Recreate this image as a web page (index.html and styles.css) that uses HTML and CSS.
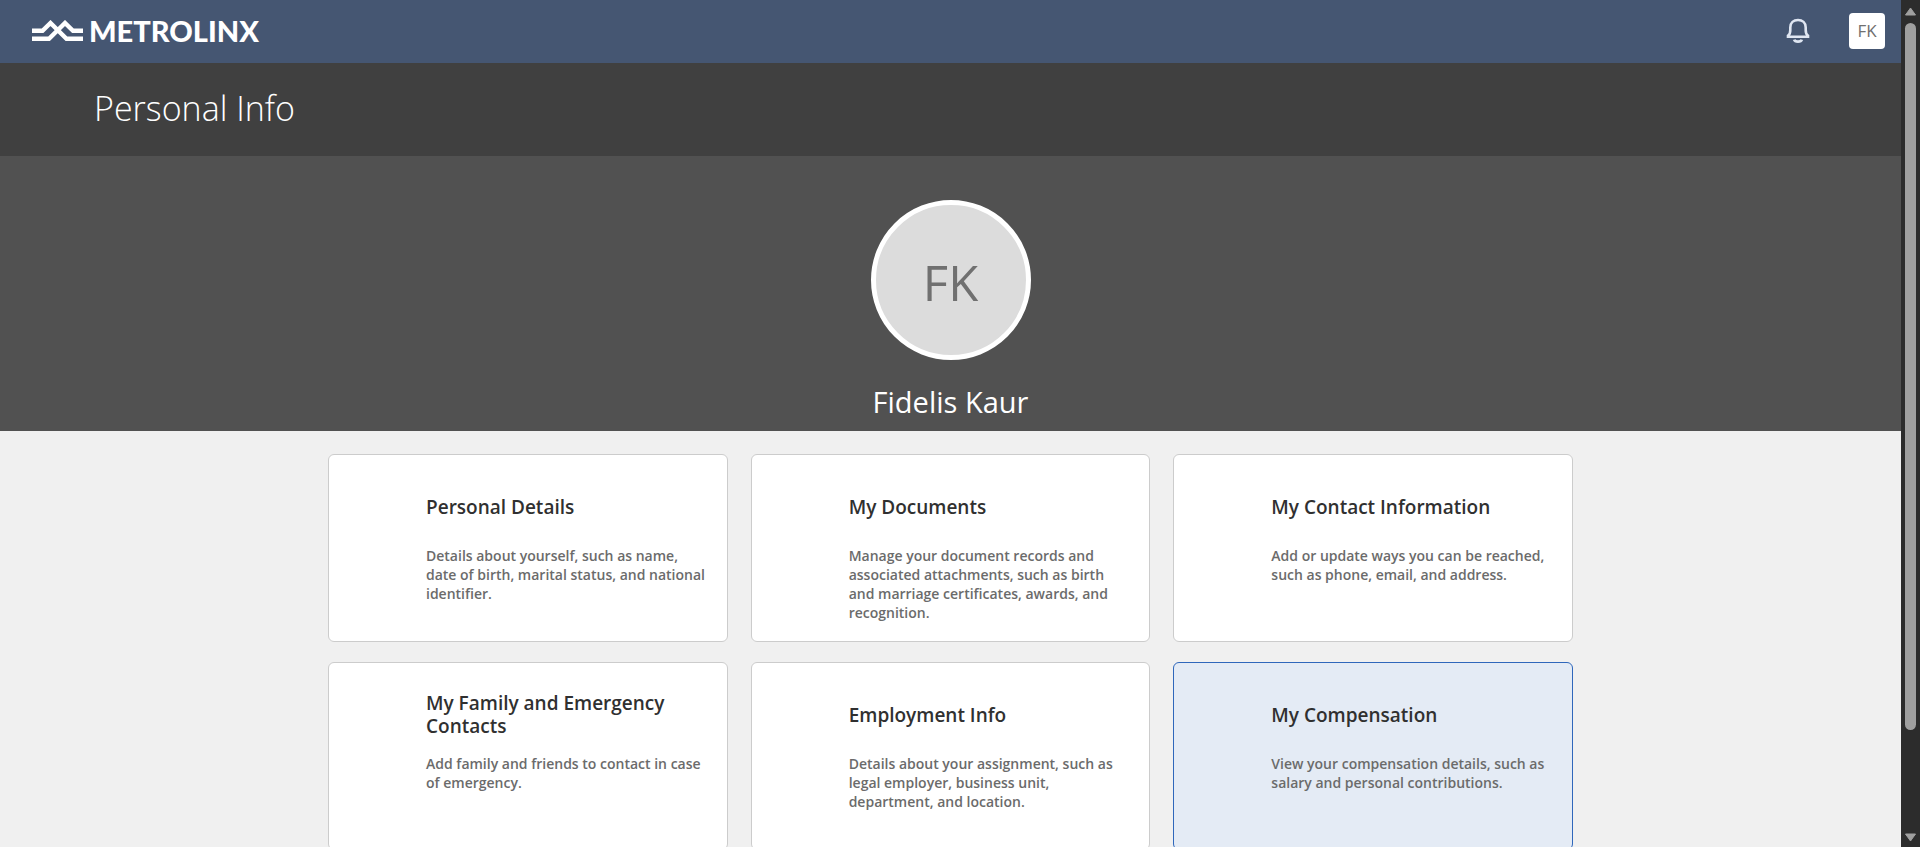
FILE: index.html
```html
<!DOCTYPE html>
<html lang="en">
<head>
<meta charset="utf-8">
<title>Personal Info</title>
<link rel="stylesheet" href="styles.css">
</head>
<body>
<div class="window">
  <div class="page">
    <header class="topbar">
      <a class="brand" href="#" aria-label="Metrolinx home">
        <svg class="brand-mark" viewBox="0 0 51 22" aria-hidden="true">
          <g fill="none" stroke="#fff" stroke-width="4.400">
            <path d="M0 10.800h10.500L18.500 3 34.500 18.800H51"/>
            <path d="M0 18.800H17L33 3 41 10.800H51"/>
          </g>
        </svg>
        <span class="brand-name">METROLINX</span>
      </a>
      <div class="actions">
        <button class="bell" type="button" aria-label="Notifications">
          <svg viewBox="0 0 24 26" aria-hidden="true">
            <g fill="none" stroke="#dfe6f2" stroke-width="2.600">
              <path d="M2 18.800V17.700C4 16.600 4.300 14.500 4.300 12V9.500C4.300 4.800 7.600 2 12 2S19.700 4.800 19.700 9.500V12C19.700 14.500 20 16.600 22 17.700V18.800Z"/>
              <path d="M8.200 21.600C9 24.300 15 24.300 15.800 21.600" stroke-width="2.800"/>
            </g>
          </svg>
        </button>
        <button class="user" type="button" aria-label="Account menu, FK">FK</button>
      </div>
    </header>
    <div class="titlebar"><h1>Personal Info</h1></div>
    <section class="profile">
      <div class="avatar">FK</div>
      <h2>Fidelis Kaur</h2>
    </section>
    <main class="cards">
      <a class="card" href="#">
        <h3>Personal Details</h3>
        <p>Details about yourself, such as name, date of birth, marital status, and national identifier.</p>
      </a>
      <a class="card" href="#">
        <h3>My Documents</h3>
        <p>Manage your document records and associated attachments, such as birth and marriage certificates, awards, and recognition.</p>
      </a>
      <a class="card" href="#">
        <h3>My Contact Information</h3>
        <p>Add or update ways you can be reached, such as phone, email, and address.</p>
      </a>
      <a class="card" href="#">
        <h3>My Family and Emergency Contacts</h3>
        <p>Add family and friends to contact in case of emergency.</p>
      </a>
      <a class="card" href="#">
        <h3>Employment Info</h3>
        <p>Details about your assignment, such as legal employer, business unit, department, and location.</p>
      </a>
      <a class="card card-active" href="#">
        <h3>My Compensation</h3>
        <p>View your compensation details, such as salary and personal contributions.</p>
      </a>
    </main>
  </div>
  <div class="scrollbar" aria-hidden="true">
    <svg viewBox="0 0 13 10"><path d="M6.500 1.500 11.500 8.500H1.500Z"/></svg>
    <div class="track"><div class="thumb"></div></div>
    <svg viewBox="0 0 13 10"><path d="M6.500 8.500 1.500 1.500H11.500Z"/></svg>
  </div>
</div>
</body>
</html>
```
FILE: styles.css
```css
* {
  box-sizing: border-box;
}

body {
  margin: 0;
  background: #f0f0f0;
  font-family: "Open Sans", "Noto Sans", sans-serif;
}

h1, h2, h3, p {
  margin: 0;
}

button {
  padding: 0;
  border: 0;
  font-family: inherit;
}

.window {
  display: flex;
  height: 100vh;
  overflow: hidden;
}

.page {
  flex: 1;
  min-width: 0;
  overflow: hidden;
}

.topbar {
  display: flex;
  align-items: center;
  justify-content: space-between;
  height: 63px;
  padding: 0 16px 2px 32px;
  background: #455672;
}

.brand {
  display: flex;
  align-items: center;
  gap: 6px;
  color: #fff;
  text-decoration: none;
}

.brand-mark {
  width: 51px;
  height: 22px;
}

.brand-name {
  font-family: Lato, sans-serif;
  font-size: 29px;
  font-weight: 900;
  line-height: 30px;
}

.actions {
  display: flex;
  align-items: center;
  gap: 39px;
}

.bell {
  width: 24px;
  height: 26px;
  background: none;
}

.bell svg {
  display: block;
}

.user {
  width: 36px;
  height: 36px;
  border-radius: 4px;
  background: #fff;
  color: #707070;
  font-size: 17px;
}

.titlebar {
  height: 93px;
  padding: 21px 94px;
  background: #404040;
}

.titlebar h1 {
  color: #fff;
  font-size: 34px;
  font-weight: 300;
  line-height: 48px;
}

.profile {
  display: flex;
  flex-direction: column;
  align-items: center;
  gap: 20px;
  padding: 44px 0 7px;
  background: #515151;
}

.avatar {
  display: flex;
  align-items: center;
  justify-content: center;
  width: 160px;
  height: 160px;
  padding-top: 4px;
  border: 5px solid #fff;
  border-radius: 50%;
  background: #dcdcdc;
  color: #707070;
  font-size: 49px;
}

.profile h2 {
  color: #fff;
  font-size: 29px;
  font-weight: 400;
  line-height: 44px;
}

.cards {
  display: grid;
  grid-template-columns: repeat(3, minmax(0, 1fr));
  gap: 20px 23px;
  max-width: 1293px;
  margin: 0 auto;
  padding: 23px 24px;
}

.card {
  min-height: 188px;
  padding: 22px 20px 18px 97px;
  border: 1px solid #ccc;
  border-radius: 6px;
  background: #fff;
  text-decoration: none;
}

.card-active {
  border-color: #2f67bb;
  background: #e4ebf5;
}

.card h3 {
  display: flex;
  align-items: center;
  min-height: 60px;
  color: #303030;
  font-size: 19px;
  font-weight: 600;
  line-height: 23px;
}

.card p {
  margin-top: 9px;
  color: #6b6b6b;
  font-size: 14px;
  font-weight: 600;
  line-height: 19px;
}

.scrollbar {
  display: flex;
  flex-direction: column;
  align-items: center;
  gap: 6px;
  width: 19px;
  padding: 6px 0 4px;
  background: #2c2c2c;
}

.scrollbar svg {
  width: 13px;
  height: 11px;
  fill: #9f9f9f;
  stroke: #9f9f9f;
  stroke-linejoin: round;
}

.track {
  flex: 1;
  width: 11px;
}

.thumb {
  height: 88%;
  border-radius: 6px;
  background: #9f9f9f;
}
```
